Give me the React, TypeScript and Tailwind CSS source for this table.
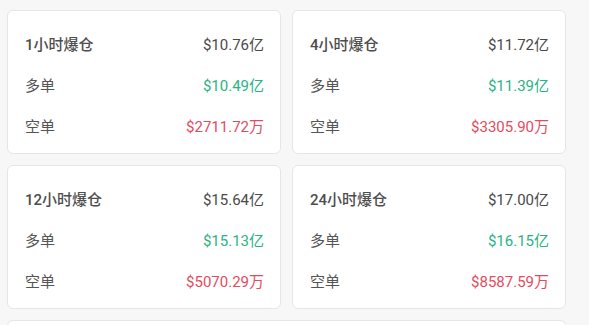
// 爆仓统计卡片：1/4/12/24 小时
const stats = [
  { period: '1小时爆仓', total: '$10.76亿', long: '$10.49亿', short: '$2711.72万' },
  { period: '4小时爆仓', total: '$11.72亿', long: '$11.39亿', short: '$3305.90万' },
  { period: '12小时爆仓', total: '$15.64亿', long: '$15.13亿', short: '$5070.29万' },
  { period: '24小时爆仓', total: '$17.00亿', long: '$16.15亿', short: '$8587.59万' },
];

function StatCard({ period, total, long, short }: (typeof stats)[number]) {
  return (
    <div className="bg-white border border-[#e6e6e6] rounded-[6px] pl-[17px] pr-[16px] pt-[23px] pb-[15px] flex flex-col gap-[19px]">
      <div className="flex items-center justify-between h-[22px]">
        <span className="font-medium text-[#4d4d4d]">{period}</span>
        <span className="text-[#4a4a4a]">{total}</span>
      </div>
      <div className="flex items-center justify-between h-[22px]">
        <span className="text-[#555]">多单</span>
        <span className="text-[#2ab386]">{long}</span>
      </div>
      <div className="flex items-center justify-between h-[22px]">
        <span className="text-[#555]">空单</span>
        <span className="text-[#e54b5e]">{short}</span>
      </div>
    </div>
  );
}

export default function App() {
  return (
    <div
      className="min-h-screen bg-[#f7f7f7] pl-[7px] pr-[23px] pt-[10px] text-[15px] leading-[22px]"
      style={{ fontFamily: 'Roboto, "Noto Sans CJK SC", sans-serif' }}
    >
      <div className="grid grid-cols-2 gap-x-[11px] gap-y-[11px]">
        {stats.map((s) => (
          <StatCard key={s.period} {...s} />
        ))}
      </div>
      {/* 下方卡片，只露出顶部 */}
      <div className="mt-[11px] h-[80px] bg-white border border-[#e6e6e6] rounded-[6px]" />
    </div>
  );
}
